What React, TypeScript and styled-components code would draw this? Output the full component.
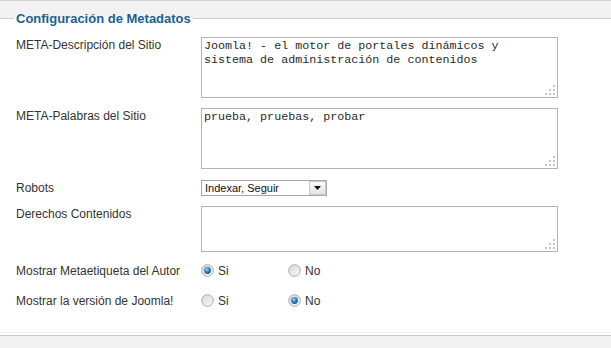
import styled, { createGlobalStyle } from 'styled-components'

const GlobalStyle = createGlobalStyle`
  html, body {
    margin: 0;
    padding: 0;
    background: #f2f2f2;
  }
  body {
    font-family: "Liberation Sans", Arial, sans-serif;
  }
`

const Page = styled.div`
  min-height: 100vh;
  box-sizing: border-box;
  border-top: 1px solid #d6d6d6;
  background: #f2f2f2;
  padding-top: 10px;
`

const Fieldset = styled.fieldset`
  margin: 0;
  padding: 0 0 0 14px;
  min-inline-size: 0;
  border: none;
  border-top: 1px solid #cdcdcd;
  border-bottom: 1px solid #c6c6c6;
  background: #fff;
  box-shadow: inset 0 -2px 0 #fff, inset 0 -3px 0 #efefef;
`

const Legend = styled.legend`
  padding: 0 2px;
  font-size: 13px;
  font-weight: bold;
  line-height: 15px;
  color: #1c6093;
`

const Form = styled.div`
  display: flex;
  flex-direction: column;
  gap: 10px;
  padding: 11px 0 26px 2px;
`

const Row = styled.div<{ $center?: boolean; $height?: number }>`
  display: grid;
  grid-template-columns: 185px auto;
  align-items: ${(p) => (p.$center ? 'center' : 'start')};
  min-height: ${(p) => (p.$height ? `${p.$height}px` : 'auto')};
`

const RadioRow = styled(Row)`
  & + & {
    margin-top: 3px;
  }
`

const Label = styled.div<{ $top?: boolean }>`
  font-size: 12px;
  line-height: 14px;
  color: #333;
  padding-top: ${(p) => (p.$top ? '1px' : '0')};
`

const AreaWrap = styled.div`
  position: relative;
  width: 357px;
`

const TextArea = styled.textarea<{ $height: number }>`
  display: block;
  box-sizing: border-box;
  width: 357px;
  height: ${(p) => p.$height}px;
  margin: 0;
  padding: 1px 2px;
  border: 1px solid #b4b4b4;
  font-family: "Liberation Mono", "Courier New", monospace;
  font-size: 11.7px;
  line-height: 14px;
  color: #2a2a2a;
  background: #fff;
  resize: none;
  outline: none;
  overflow: hidden;
`

const Grip = styled.svg`
  position: absolute;
  right: 2px;
  bottom: 2px;
  pointer-events: none;
`

const SelectBox = styled.div`
  display: flex;
  align-items: stretch;
  box-sizing: border-box;
  width: 126px;
  height: 16px;
  border: 1px solid #a7a7a7;
  background: #fff;
  font-size: 11px;
  color: #111;
`

const SelectValue = styled.span`
  flex: 1;
  padding-left: 3px;
  line-height: 14px;
  white-space: nowrap;
`

const DropButton = styled.span`
  display: flex;
  align-items: center;
  justify-content: center;
  box-sizing: border-box;
  width: 17px;
  border: 1px solid #c8c8c8;
  background: linear-gradient(#fbfbfb, #e4e4e4);
`

const RadioGroup = styled.div`
  display: flex;
`

const Option = styled.label`
  display: inline-flex;
  align-items: center;
  gap: 4px;
  width: 87px;
  font-size: 12px;
  line-height: 14px;
  color: #333;
`

function ResizeGrip() {
  const dots = [
    [9, 1],
    [5, 5],
    [9, 5],
    [1, 9],
    [5, 9],
    [9, 9],
  ]
  return (
    <Grip width="12" height="12" viewBox="0 0 12 12">
      {dots.map(([x, y]) => (
        <rect key={`${x}-${y}`} x={x} y={y} width="2" height="2" fill="#c4c4c4" />
      ))}
    </Grip>
  )
}

function Area({ height, value }: { height: number; value?: string }) {
  return (
    <AreaWrap>
      <TextArea $height={height} defaultValue={value} readOnly />
      <ResizeGrip />
    </AreaWrap>
  )
}

function Radio({ checked }: { checked?: boolean }) {
  return (
    <svg width="13" height="13" viewBox="0 0 13 13">
      <defs>
        <linearGradient id="rbg" x1="0" y1="0" x2="1" y2="1">
          <stop offset="0" stopColor="#d6d6d6" />
          <stop offset="1" stopColor="#fbfbfb" />
        </linearGradient>
        <radialGradient id="rdot" cx="0.4" cy="0.35" r="0.7">
          <stop offset="0" stopColor="#9fd8fa" />
          <stop offset="0.5" stopColor="#3184c8" />
          <stop offset="1" stopColor="#174c83" />
        </radialGradient>
      </defs>
      <circle cx="6.5" cy="6.5" r="5.8" fill="url(#rbg)" stroke="#a9a9a9" strokeWidth="1" />
      {checked && <circle cx="6.5" cy="6.5" r="3.4" fill="url(#rdot)" />}
    </svg>
  )
}

function YesNo({ yes }: { yes: boolean }) {
  return (
    <RadioGroup>
      <Option>
        <Radio checked={yes} />
        Si
      </Option>
      <Option>
        <Radio checked={!yes} />
        No
      </Option>
    </RadioGroup>
  )
}

export default function App() {
  return (
    <Page>
      <GlobalStyle />
      <Fieldset>
        <Legend>Configuración de Metadatos</Legend>
        <Form>
          <Row>
            <Label $top>META-Descripción del Sitio</Label>
            <Area
              height={61}
              value={'Joomla! - el motor de portales dinámicos y\nsistema de administración de contenidos'}
            />
          </Row>
          <Row>
            <Label $top>META-Palabras del Sitio</Label>
            <Area height={61} value="prueba, pruebas, probar" />
          </Row>
          <Row $center $height={17}>
            <Label>Robots</Label>
            <SelectBox>
              <SelectValue>Indexar, Seguir</SelectValue>
              <DropButton>
                <svg width="7" height="4" viewBox="0 0 7 4">
                  <path d="M0 0H7L3.5 4Z" fill="#111" />
                </svg>
              </DropButton>
            </SelectBox>
          </Row>
          <Row>
            <Label $top>Derechos Contenidos</Label>
            <Area height={46} />
          </Row>
          <RadioRow $center $height={17}>
            <Label>Mostrar Metaetiqueta del Autor</Label>
            <YesNo yes />
          </RadioRow>
          <RadioRow $center $height={17}>
            <Label>Mostrar la versión de Joomla!</Label>
            <YesNo yes={false} />
          </RadioRow>
        </Form>
      </Fieldset>
    </Page>
  )
}
